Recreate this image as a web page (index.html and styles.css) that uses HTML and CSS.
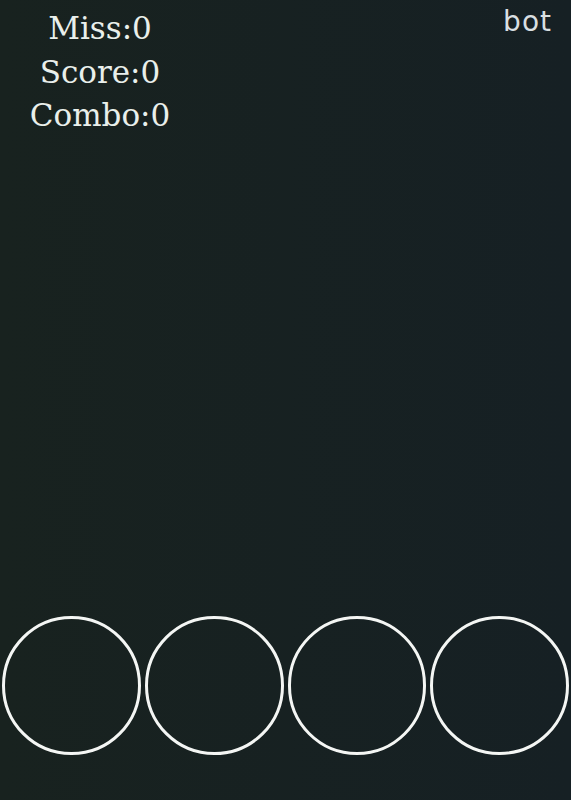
FILE: index.html
```html
<!DOCTYPE html>
<html lang="en">
<head>
  <meta charset="UTF-8">
  <meta name="viewport" content="width=device-width, initial-scale=1.0">
  <title>Rhythm</title>
  <link rel="stylesheet" href="styles.css">
</head>
<body>
  <div class="top">
    <div class="stats">
      <div>Miss:<span id="miss">0</span></div>
      <div>Score:<span id="score">0</span></div>
      <div>Combo:<span id="combo">0</span></div>
    </div>
    <div class="bot">bot</div>
  </div>
  <div class="field"></div>
  <div class="keys">
    <div class="key"></div>
    <div class="key"></div>
    <div class="key"></div>
    <div class="key"></div>
  </div>
</body>
</html>
```

FILE: styles.css
```css
html, body {
  height: 100%;
}
body {
  margin: 0;
  background: linear-gradient(to right, #18221f, #162024);
  display: flex;
  flex-direction: column;
  overflow: hidden;
}
.top {
  display: flex;
  justify-content: space-between;
  align-items: flex-start;
}
.stats {
  width: 200px;
  padding-top: 7px;
  text-align: center;
  font-family: "DejaVu Serif", serif;
  font-size: 31px;
  line-height: 43.5px;
  color: #e9efeb;
}
.bot {
  padding: 5px 19px 0 0;
  font-family: "DejaVu Sans", sans-serif;
  font-size: 28px;
  letter-spacing: 1px;
  color: #d9dfe1;
}
.field {
  flex: 1;
}
.keys {
  display: flex;
  margin-bottom: 45px;
}
.key {
  width: calc(25% - 4px);
  aspect-ratio: 1;
  margin: 0 2px;
  box-sizing: border-box;
  border: 3px solid #f4f6f4;
  border-radius: 50%;
}
```
